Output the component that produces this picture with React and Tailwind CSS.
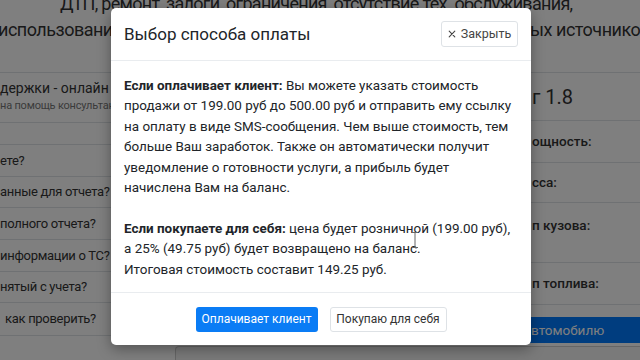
import React from 'react';

const font = { fontFamily: 'Roboto, "Noto Sans", "Liberation Sans", sans-serif' };

const leftRows = [
  { h: 'h-[32px]', text: 'ете?' },
  { h: 'h-[31px]', text: 'анные для отчета?' },
  { h: 'h-[32px]', text: 'полного отчета?' },
  { h: 'h-[32px]', text: 'информации о ТС?' },
  { h: 'h-[31px]', text: 'нятый с учета?' },
  { h: 'h-[33px] pl-[5px]', text: 'как проверить?' },
];

const rightRows = [
  { h: 'h-[42px]', text: 'ощность:' },
  { h: 'h-[40px]', text: 'сса:' },
  { h: 'h-[60px] items-start pt-[12px]', text: 'п кузова:' },
  { h: 'h-[42px]', text: 'п топлива:' },
];

const Page = () => (
  <div className="text-[#333]">
    <div className="-mt-[9px] text-[18px] leading-[26px] tracking-[-0.5px] whitespace-nowrap">
      <div className="pl-[60px] tracking-[-0.7px]">ДТП, ремонт, залоги, ограничения, отсутствие тех. обслуживания,</div>
      <div className="-ml-[2px]">использование в такси, нахождение в розыске, данные из открытых источников</div>
    </div>

    <div className="mt-[29px] flex">
      {/* left column */}
      <div className="w-[340px] shrink-0">
        <div className="h-[51px] border-y border-[#dee2e6] pt-[5px] whitespace-nowrap">
          <div className="text-[14px] leading-[20px]">держки - онлайн</div>
          <div className="text-[11px] leading-[14px] mt-px text-[#777] tracking-[-0.2px]">на помощь консультанта</div>
        </div>
        <div className="h-[22px] border-b border-[#dee2e6]" />
        {leftRows.map((r) => (
          <div key={r.text} className={`${r.h} flex items-center border-b border-[#dee2e6] text-[13px] tracking-[-0.3px] whitespace-nowrap`}>
            {r.text}
          </div>
        ))}
      </div>

      {/* right column */}
      <div className="flex-1 ml-[15px]">
        <div className="h-[49px] flex items-center border-y border-[#dee2e6] pl-[177px] text-[20px] whitespace-nowrap">
          г 1.8
        </div>
        {rightRows.map((r) => (
          <div key={r.text} className={`${r.h} flex items-center border-b border-[#dee2e6] pl-[177px] text-[13.5px] font-medium whitespace-nowrap`}>
            {r.text}
          </div>
        ))}
        <div className="mt-[12px] h-[26px] bg-[#007bff] text-white text-[13.5px] flex items-center pl-[176px] whitespace-nowrap">
          втомобилю
        </div>
      </div>
    </div>

    <div className="mt-[3px] ml-[175px] h-[20px] border-t border-l border-[#ccc] rounded-tl bg-[#f4f4f4]" />
  </div>
);

const PaymentModal = () => (
  <div className="absolute left-[111px] top-[8px] w-[420px] bg-white rounded-[5px] shadow-[0_4px_14px_rgba(0,0,0,0.35)] text-[#212529]">
    {/* header */}
    <div className="h-[53px] flex items-center justify-between px-[13px] border-b border-[#e9ecef]">
      <h5 className="text-[17px] leading-none">Выбор способа оплаты</h5>
      <button className="h-[26px] w-[77px] flex items-center justify-center gap-[5px] border border-[#dee2e6] rounded-[3px] text-[12.5px] text-[#444] bg-white">
        <svg width="8" height="8" viewBox="0 0 10 10" stroke="#444" strokeWidth="1.4" strokeLinecap="round">
          <path d="M1.5 1.5l7 7M8.5 1.5l-7 7" />
        </svg>
        Закрыть
      </button>
    </div>

    {/* body */}
    <div className="px-[13px] pt-[15px] pb-[12px] text-[13.45px] leading-[20.4px] whitespace-nowrap">
      <p className="mb-[20.4px]">
        <b className="font-bold">Если оплачивает клиент:</b> Вы можете указать стоимость<br />
        продажи от 199.00 руб до 500.00 руб и отправить ему ссылку<br />
        на оплату в виде SMS-сообщения. Чем выше стоимость, тем<br />
        больше Ваш заработок. Также он автоматически получит<br />
        уведомление о готовности услуги, а прибыль будет<br />
        начислена Вам на баланс.
      </p>
      <p>
        <b className="font-bold">Если покупаете для себя:</b> цена будет розничной (199.00 руб),<br />
        а 25% (49.75 руб) будет возвращено на баланс.<br />
        Итоговая стоимость составит 149.25 руб.
      </p>
    </div>

    {/* footer */}
    <div className="h-[53px] flex items-center justify-center gap-[12px] border-t border-[#e9ecef]">
      <button className="h-[25px] w-[122px] rounded-[3px] bg-[#0a7cf5] text-white text-[12px]">
        Оплачивает клиент
      </button>
      <button className="h-[25px] w-[117px] rounded-[3px] border border-[#dee2e6] bg-white text-[#333] text-[12px]">
        Покупаю для себя
      </button>
    </div>
  </div>
);

export default function App() {
  return (
    <div className="w-[640px] h-[360px] relative overflow-hidden bg-white" style={font}>
      <Page />
      <div className="absolute inset-0 bg-black/50" />
      <PaymentModal />
      {/* text cursor */}
      <svg className="absolute left-[411px] top-[232px]" width="8" height="16" viewBox="0 0 8 16" fill="none" stroke="#666" strokeWidth="1">
        <path d="M1 0.5h6M4 0.5v15M1 15.5h6" />
      </svg>
    </div>
  );
}
